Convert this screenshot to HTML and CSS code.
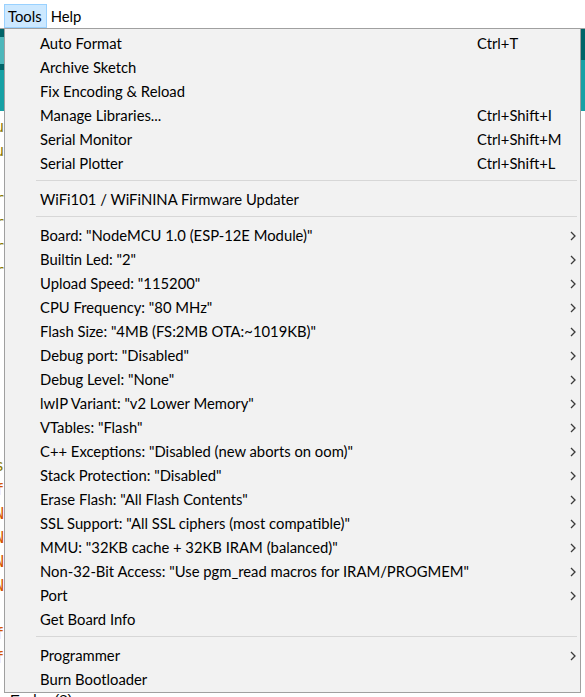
FILE: index.html
```html
<!DOCTYPE html>
<html>
<head>
<meta charset="utf-8">
<link rel="stylesheet" href="styles.css">
</head>
<body>
<div class="app">
  <div class="menubar">
    <span class="mb-item active">Tools</span>
    <span class="mb-item">Help</span>
  </div>
  <div class="toolbar">
    <div class="tb-left">
      <div class="tb-dark1"></div>
      <div class="tb-btn"></div>
      <div class="tb-dark2"></div>
      <div class="tb-tabs"></div>
    </div>
    <div class="tb-right">
      <div class="tb-rdark"></div>
      <div class="tb-rtabs"></div>
    </div>
  </div>
  <div class="editor">
    <div class="code c1">
      <div class="ln olive">u</div>
      <div class="ln olive">u</div>
      <div class="ln"></div>
      <div class="ln olive">r</div>
      <div class="ln olive">r</div>
      <div class="ln olive">r</div>
      <div class="ln olive">r</div>
    </div>
    <div class="code c2">
      <div class="ln olive">s</div>
      <div class="ln orange">f</div>
      <div class="ln orange">N</div>
      <div class="ln orange">N</div>
      <div class="ln orange">N</div>
      <div class="ln orange">N</div>
      <div class="ln"></div>
      <div class="ln orange">f</div>
      <div class="ln orange">f</div>
    </div>
    <div class="status">Ender (8)</div>
  </div>

  <div class="menu">
    <div class="item"><span class="label">Auto Format</span><span class="key">Ctrl+T</span><span class="arrow"></span></div>
    <div class="item"><span class="label">Archive Sketch</span><span class="key"></span><span class="arrow"></span></div>
    <div class="item"><span class="label">Fix Encoding &amp; Reload</span><span class="key"></span><span class="arrow"></span></div>
    <div class="item"><span class="label">Manage Libraries...</span><span class="key">Ctrl+Shift+I</span><span class="arrow"></span></div>
    <div class="item"><span class="label">Serial Monitor</span><span class="key">Ctrl+Shift+M</span><span class="arrow"></span></div>
    <div class="item"><span class="label">Serial Plotter</span><span class="key">Ctrl+Shift+L</span><span class="arrow"></span></div>
    <div class="sep"></div>
    <div class="item"><span class="label">WiFi101 / WiFiNINA Firmware Updater</span><span class="key"></span><span class="arrow"></span></div>
    <div class="sep"></div>
    <div class="item"><span class="label">Board: "NodeMCU 1.0 (ESP-12E Module)"</span><span class="key"></span><span class="arrow"><svg class="chev" width="6" height="10" viewBox="0 0 6 10"><path d="M1 1L5 5L1 9"/></svg></span></div>
    <div class="item"><span class="label">Builtin Led: "2"</span><span class="key"></span><span class="arrow"><svg class="chev" width="6" height="10" viewBox="0 0 6 10"><path d="M1 1L5 5L1 9"/></svg></span></div>
    <div class="item"><span class="label">Upload Speed: "115200"</span><span class="key"></span><span class="arrow"><svg class="chev" width="6" height="10" viewBox="0 0 6 10"><path d="M1 1L5 5L1 9"/></svg></span></div>
    <div class="item"><span class="label">CPU Frequency: "80 MHz"</span><span class="key"></span><span class="arrow"><svg class="chev" width="6" height="10" viewBox="0 0 6 10"><path d="M1 1L5 5L1 9"/></svg></span></div>
    <div class="item"><span class="label">Flash Size: "4MB (FS:2MB OTA:~1019KB)"</span><span class="key"></span><span class="arrow"><svg class="chev" width="6" height="10" viewBox="0 0 6 10"><path d="M1 1L5 5L1 9"/></svg></span></div>
    <div class="item"><span class="label">Debug port: "Disabled"</span><span class="key"></span><span class="arrow"><svg class="chev" width="6" height="10" viewBox="0 0 6 10"><path d="M1 1L5 5L1 9"/></svg></span></div>
    <div class="item"><span class="label">Debug Level: "None"</span><span class="key"></span><span class="arrow"><svg class="chev" width="6" height="10" viewBox="0 0 6 10"><path d="M1 1L5 5L1 9"/></svg></span></div>
    <div class="item"><span class="label">lwIP Variant: "v2 Lower Memory"</span><span class="key"></span><span class="arrow"><svg class="chev" width="6" height="10" viewBox="0 0 6 10"><path d="M1 1L5 5L1 9"/></svg></span></div>
    <div class="item"><span class="label">VTables: "Flash"</span><span class="key"></span><span class="arrow"><svg class="chev" width="6" height="10" viewBox="0 0 6 10"><path d="M1 1L5 5L1 9"/></svg></span></div>
    <div class="item"><span class="label">C++ Exceptions: "Disabled (new aborts on oom)"</span><span class="key"></span><span class="arrow"><svg class="chev" width="6" height="10" viewBox="0 0 6 10"><path d="M1 1L5 5L1 9"/></svg></span></div>
    <div class="item"><span class="label">Stack Protection: "Disabled"</span><span class="key"></span><span class="arrow"><svg class="chev" width="6" height="10" viewBox="0 0 6 10"><path d="M1 1L5 5L1 9"/></svg></span></div>
    <div class="item"><span class="label">Erase Flash: "All Flash Contents"</span><span class="key"></span><span class="arrow"><svg class="chev" width="6" height="10" viewBox="0 0 6 10"><path d="M1 1L5 5L1 9"/></svg></span></div>
    <div class="item"><span class="label">SSL Support: "All SSL ciphers (most compatible)"</span><span class="key"></span><span class="arrow"><svg class="chev" width="6" height="10" viewBox="0 0 6 10"><path d="M1 1L5 5L1 9"/></svg></span></div>
    <div class="item"><span class="label">MMU: "32KB cache + 32KB IRAM (balanced)"</span><span class="key"></span><span class="arrow"><svg class="chev" width="6" height="10" viewBox="0 0 6 10"><path d="M1 1L5 5L1 9"/></svg></span></div>
    <div class="item"><span class="label">Non-32-Bit Access: "Use pgm_read macros for IRAM/PROGMEM"</span><span class="key"></span><span class="arrow"><svg class="chev" width="6" height="10" viewBox="0 0 6 10"><path d="M1 1L5 5L1 9"/></svg></span></div>
    <div class="item"><span class="label">Port</span><span class="key"></span><span class="arrow"><svg class="chev" width="6" height="10" viewBox="0 0 6 10"><path d="M1 1L5 5L1 9"/></svg></span></div>
    <div class="item"><span class="label">Get Board Info</span><span class="key"></span><span class="arrow"></span></div>
    <div class="sep"></div>
    <div class="item"><span class="label">Programmer</span><span class="key"></span><span class="arrow"><svg class="chev" width="6" height="10" viewBox="0 0 6 10"><path d="M1 1L5 5L1 9"/></svg></span></div>
    <div class="item"><span class="label">Burn Bootloader</span><span class="key"></span><span class="arrow"></span></div>
  </div>
</div>
</body>
</html>
```

FILE: styles.css
```css
* { box-sizing: border-box; }
html, body { margin: 0; padding: 0; }
body {
  width: 585px;
  height: 697px;
  overflow: hidden;
  background: #ffffff;
  font-family: "Lato", "Noto Sans", sans-serif;
  font-size: 14.8px;
  color: #000;
}
.app {
  position: relative;
  width: 585px;
  height: 697px;
  overflow: hidden;
}
.menubar {
  height: 29px;
  border-bottom: 1px solid #a0a0a0;
  display: flex;
  align-items: flex-start;
  padding: 4px 0 0 4px;
}
.mb-item {
  height: 24px;
  line-height: 23px;
  padding: 0 4px 0 3px;
  border: 1px solid transparent;
}
.mb-item.active {
  background: #cce8ff;
  border-color: #99d1ff;
}
.toolbar {
  display: flex;
  justify-content: space-between;
  height: 82px;
}
.tb-left, .tb-right { width: 6px; display: flex; flex-direction: column; }
.tb-dark1 { height: 8px; background: #006468; }
.tb-btn { height: 27px; background: #4db7bb; }
.tb-dark2 { height: 6px; background: #006468; }
.tb-tabs { flex: 1; background: #17a1a5; }
.tb-rdark { height: 31px; background: #006468; }
.tb-rtabs { flex: 1; background: #17a1a5; }
.editor {
  position: relative;
  height: 586px;
  font-family: "DejaVu Sans Mono", monospace;
  font-size: 15px;
}
.code { padding-left: 0; margin-left: -5px; }
.c1 { padding-top: 4px; }
.c2 { padding-top: 171px; }
.ln { height: 24px; line-height: 24px; }
.olive { color: #8a7a00; }
.orange { color: #d35400; }
.status {
  position: absolute;
  left: 10px;
  top: 580px;
  font-family: "Liberation Sans", sans-serif;
  font-size: 15px;
  color: #000;
}
.menu {
  position: absolute;
  left: 4px;
  top: 28px;
  width: 577px;
  height: 665px;
  background: #f2f2f2;
  border: 1px solid #a0a0a0;
  padding-top: 3px;
}
.item {
  display: flex;
  align-items: center;
  height: 24px;
  padding-left: 35px;
  padding-bottom: 2px;
  white-space: nowrap;
}
.label { width: 437px; }
.key { flex: 1; }
.arrow {
  width: 8px;
  margin-right: 2px;
  display: flex;
  align-items: center;
  padding-top: 2px;
}
.chev { fill: none; stroke: #3c3c3c; stroke-width: 1.3; }
.sep {
  height: 12px;
  padding-top: 4px;
  margin-left: 31px;
  margin-right: 3px;
}
.sep::before {
  content: "";
  display: block;
  height: 1px;
  background: #d7d7d7;
}
```
